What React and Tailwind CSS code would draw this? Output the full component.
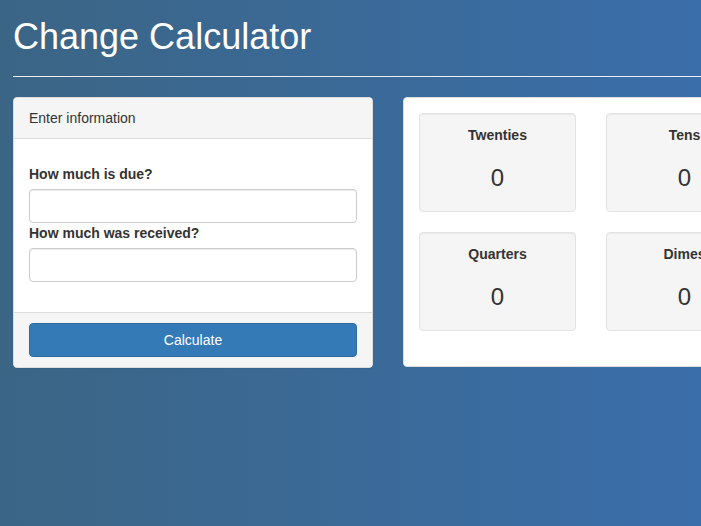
const coins = [
  ["Twenties", 0],
  ["Tens", 0],
  ["Fives", 0],
  ["Ones", 0],
  ["Quarters", 0],
  ["Dimes", 0],
  ["Nickels", 0],
  ["Pennies", 0],
];

function Field({ label, id }) {
  return (
    <div className="flex flex-col">
      <label htmlFor={id} className="mb-[5px] font-bold leading-5">
        {label}
      </label>
      <input
        id={id}
        type="text"
        className="h-[34px] w-full rounded border border-[#ccc] bg-white px-3 shadow-[inset_0_1px_1px_rgba(0,0,0,0.075)] focus:outline-none"
      />
    </div>
  );
}

function App() {
  return (
    <div className="h-[526px] w-full overflow-hidden bg-gradient-to-r from-[#3b6585] to-[#3a6eaa] font-['Liberation_Sans',Arial,sans-serif] text-[14px] text-[#333]">
      <div className="w-[1170px] pl-[13px] pt-[17px]">
        <h1 className="text-[36px] leading-[40px] text-white">Change Calculator</h1>
        <hr className="mt-[19px] border-t border-[#eee]" />

        <div className="mt-5 flex items-start gap-[30px]">
          {/* input panel */}
          <div className="w-[360px] rounded border border-[#ddd] bg-white shadow-[0_1px_1px_rgba(0,0,0,0.05)]">
            <div className="rounded-t border-b border-[#ddd] bg-[#f5f5f5] px-[15px] py-[10px] leading-5">
              Enter information
            </div>
            <form className="flex flex-col px-[15px] pt-[25px] pb-[30px]">
              <Field label="How much is due?" id="due" />
              <Field label="How much was received?" id="received" />
            </form>
            <div className="rounded-b border-t border-[#ddd] bg-[#f5f5f5] px-[15px] py-[10px]">
              <button
                type="button"
                className="h-[34px] w-full rounded border border-[#2e6da4] bg-[#337ab7] text-white"
              >
                Calculate
              </button>
            </div>
          </div>

          {/* results panel */}
          <div className="w-[750px] rounded border border-[#ddd] bg-white p-[15px] pb-0">
            <div className="grid grid-cols-4 gap-x-[30px]">
              {coins.map(([name, count]) => (
                <div
                  key={name}
                  className="mb-5 h-[99px] rounded border border-[#e3e3e3] bg-[#f5f5f5] pt-[11px] text-center shadow-[inset_0_1px_1px_rgba(0,0,0,0.05)]"
                >
                  <div className="font-bold leading-5">{name}</div>
                  <div className="mt-[20px] text-[24px] leading-[26px]">{count}</div>
                </div>
              ))}
            </div>
            <div className="h-[15px]" />
          </div>
        </div>
      </div>
    </div>
  );
}

export default App;
